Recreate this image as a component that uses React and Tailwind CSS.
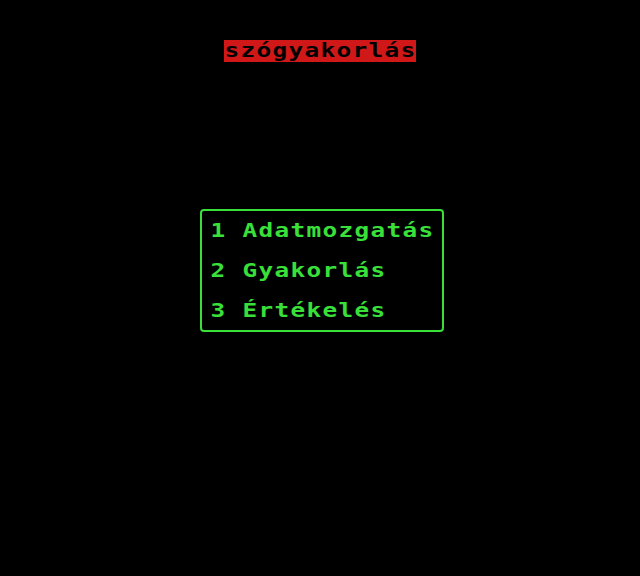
import React from "react";

function Cells({ text }) {
  return (
    <>
      {Array.from(text).map((c, i) => (
        <span key={i} className="inline-block w-4 text-center">
          <span className="inline-block scale-x-[1.25]">{c === " " ? "\u00a0" : c}</span>
        </span>
      ))}
    </>
  );
}

export default function App() {
  const items = ["1 Adatmozgatás", "2 Gyakorlás", "3 Értékelés"];
  return (
    <div
      className="w-[640px] h-[576px] bg-black flex flex-col items-center font-bold text-[19.5px]"
      style={{ fontFamily: '"DejaVu Sans Mono", "Liberation Mono", monospace' }}
    >
      <div className="mt-[40px] h-[22px] leading-[22px] bg-[#d01818] text-black whitespace-nowrap">
        <Cells text="szógyakorlás" />
      </div>
      <div className="mt-[147px] ml-[4px] w-[244px] h-[123px] border-2 border-[#3ae03a] rounded-[4px] pl-[8px] text-[#3ae03a]">
        {items.map((t) => (
          <div key={t} className="h-10 leading-[40px] whitespace-nowrap">
            <Cells text={t} />
          </div>
        ))}
      </div>
    </div>
  );
}
